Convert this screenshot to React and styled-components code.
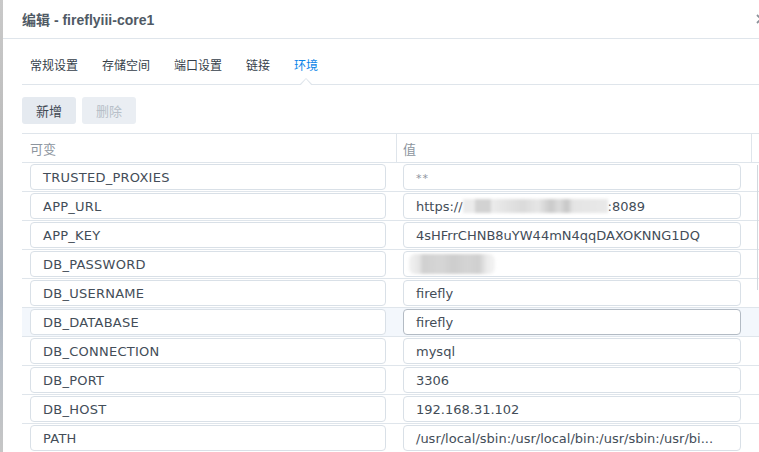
import React from 'react';
import styled, { createGlobalStyle } from 'styled-components';

const GlobalStyle = createGlobalStyle`
  html, body {
    margin: 0;
    padding: 0;
    background: #fff;
    overflow: hidden;
  }
  * {
    box-sizing: border-box;
  }
`;

const FONT = `"Liberation Sans", "Noto Sans CJK SC", Arial, sans-serif`;
const FIELD_FONT = `"DejaVu Sans", "Noto Sans CJK SC", Verdana, sans-serif`;
const LINE = '#dfe5eb';

const Page = styled.div`
  display: flex;
  width: 759px;
  height: 452px;
  font-family: ${FONT};
  overflow: hidden;
`;

const BackWindow = styled.div`
  width: 3px;
  flex-shrink: 0;
  background: linear-gradient(
    to bottom,
    #c9c9c9 0%,
    #bdbdbd 30%,
    #a9b2bd 66%,
    #b7bec6 80%,
    #c6c6c6 100%
  );
`;

const Dialog = styled.div`
  flex: 1;
  min-width: 0;
  display: flex;
  flex-direction: column;
  overflow: hidden;
  background: #fff;
`;

const TitleBar = styled.div`
  height: 39px;
  flex-shrink: 0;
  display: flex;
  align-items: center;
  justify-content: space-between;
  padding-left: 19px;
  border-bottom: 1px solid ${LINE};
`;

const Title = styled.div`
  font-size: 14px;
  font-weight: 700;
  color: #505a65;
  white-space: nowrap;
`;

const Close = styled.svg`
  width: 10px;
  height: 10px;
  margin-right: -7px;
  flex-shrink: 0;
`;

const Body = styled.div`
  position: relative;
  padding-left: 19px;
  display: flex;
  flex-direction: column;
`;

const Tabs = styled.div`
  height: 46px;
  display: flex;
  gap: 24px;
  padding-left: 8px;
  border-bottom: 1px solid ${LINE};
`;

const Tab = styled.div`
  position: relative;
  padding-top: 17px;
  font-size: 12px;
  line-height: 20px;
  color: ${(p) => (p.$active ? '#0a84e8' : '#353e49')};
  white-space: nowrap;

  ${(p) =>
    p.$active &&
    `
    &::before,
    &::after {
      content: '';
      position: absolute;
      left: 50%;
      transform: translateX(-50%);
      width: 0;
      height: 0;
      border-left: solid transparent;
      border-right: solid transparent;
      border-bottom: solid;
    }
    &::before {
      bottom: -1px;
      border-width: 0 7px 7px 7px;
      border-bottom-color: ${LINE};
    }
    &::after {
      bottom: -2px;
      border-width: 0 6px 7px 6px;
      border-bottom-color: #fff;
    }
  `}
`;

const Toolbar = styled.div`
  display: flex;
  gap: 6px;
  padding-top: 12px;
`;

const Button = styled.button`
  width: 54px;
  height: 27px;
  border: none;
  border-radius: 3px;
  padding: 0;
  font-family: ${FONT};
  font-size: 13px;
  background: ${(p) => (p.disabled ? '#eaeef3' : '#e5eaf0')};
  color: ${(p) => (p.disabled ? '#b7bfc8' : '#3f4852')};
`;

const Table = styled.div`
  margin-top: 9px;
  border-top: 1px solid ${LINE};
`;

const Row = styled.div`
  display: grid;
  grid-template-columns: 374px 355px 1fr;
  height: 29px;
  border-bottom: 1px solid ${LINE};
  background: ${(p) => (p.$hover ? '#f3f7fc' : 'transparent')};
`;

const HeadCell = styled.div`
  display: flex;
  align-items: center;
  padding-left: ${(p) => (p.$first ? '8px' : '6px')};
  border-left: ${(p) => (p.$first ? 'none' : `1px solid ${LINE}`)};
  font-size: 13px;
  color: #8d959e;
`;

const Cell = styled.div`
  display: flex;
  align-items: center;
  padding: 0 10px 0 ${(p) => (p.$first ? '8px' : '7px')};
`;

const Field = styled.div`
  width: 100%;
  height: 26px;
  display: flex;
  align-items: center;
  padding: 0 12px;
  border: 1px solid ${(p) => (p.$focus ? '#b3bbc4' : '#d9e0e7')};
  border-radius: 4px;
  background: #fff;
  font-family: ${FIELD_FONT};
  font-size: 13px;
  letter-spacing: ${(p) => (p.$name ? '0.25px' : '0')};
  color: #434d58;
  white-space: nowrap;
  overflow: hidden;
`;

const Stars = styled.span`
  font-size: 11px;
  color: #8d959e;
  letter-spacing: 1px;
  margin-top: 2px;
`;

const UrlBlur = styled.span`
  display: inline-block;
  width: 145px;
  height: 14px;
  filter: blur(1.5px);
  background: linear-gradient(
    to right,
    #ebebeb 0px,
    #ebebeb 12px,
    #d2d2d2 12px,
    #d2d2d2 28px,
    #ececec 28px,
    #e2e2e2 45px,
    #dadada 60px,
    #e6e6e6 75px,
    #c9c9c9 88px,
    #dcdcdc 96px,
    #c6c6c6 104px,
    #e4e4e4 110px,
    #e9e9e9 145px
  );
`;

const PassBlur = styled.span`
  display: inline-block;
  width: 86px;
  height: 20px;
  margin-left: -7px;
  border-radius: 6px;
  filter: blur(1.5px);
  background: linear-gradient(
    to right,
    #f2f2f2 0px,
    #e6e6e6 10px,
    #d0d0d0 14px,
    #d6d6d6 32px,
    #cdcdcd 44px,
    #d4d4d4 58px,
    #cfcfcf 70px,
    #ececec 78px,
    #f4f4f4 86px
  );
`;

const ScrollThumb = styled.div`
  position: absolute;
  right: 1px;
  top: 126px;
  width: 1px;
  height: 125px;
  background: #d2d8de;
`;

const rows = [
  { name: 'TRUSTED_PROXIES', value: <Stars>**</Stars> },
  {
    name: 'APP_URL',
    value: (
      <>
        https://
        <UrlBlur />
        :8089
      </>
    ),
  },
  { name: 'APP_KEY', value: '4sHFrrCHNB8uYW44mN4qqDAXOKNNG1DQ' },
  { name: 'DB_PASSWORD', value: <PassBlur /> },
  { name: 'DB_USERNAME', value: 'firefly' },
  { name: 'DB_DATABASE', value: 'firefly', hover: true },
  { name: 'DB_CONNECTION', value: 'mysql' },
  { name: 'DB_PORT', value: '3306' },
  { name: 'DB_HOST', value: '192.168.31.102' },
  { name: 'PATH', value: '/usr/local/sbin:/usr/local/bin:/usr/sbin:/usr/bi...' },
];

const tabs = ['常规设置', '存储空间', '端口设置', '链接', '环境'];

const App = () => {
  return (
    <>
      <GlobalStyle />
      <Page>
        <BackWindow />
        <Dialog>
          <TitleBar>
            <Title>编辑 - fireflyiii-core1</Title>
            <Close viewBox="0 0 10 10">
              <path
                d="M1 1 L9 9 M9 1 L1 9"
                stroke="#8a9199"
                strokeWidth="1.8"
                fill="none"
              />
            </Close>
          </TitleBar>
          <Body>
            <Tabs>
              {tabs.map((t) => (
                <Tab key={t} $active={t === '环境'}>
                  {t}
                </Tab>
              ))}
            </Tabs>
            <Toolbar>
              <Button>新增</Button>
              <Button disabled>删除</Button>
            </Toolbar>
            <Table>
              <Row>
                <HeadCell $first>可变</HeadCell>
                <HeadCell>值</HeadCell>
                <HeadCell />
              </Row>
              {rows.map((r) => (
                <Row key={r.name} $hover={r.hover}>
                  <Cell $first>
                    <Field $name>{r.name}</Field>
                  </Cell>
                  <Cell>
                    <Field $focus={r.hover}>{r.value}</Field>
                  </Cell>
                  <div />
                </Row>
              ))}
            </Table>
            <ScrollThumb />
          </Body>
        </Dialog>
      </Page>
    </>
  );
};

export default App;
